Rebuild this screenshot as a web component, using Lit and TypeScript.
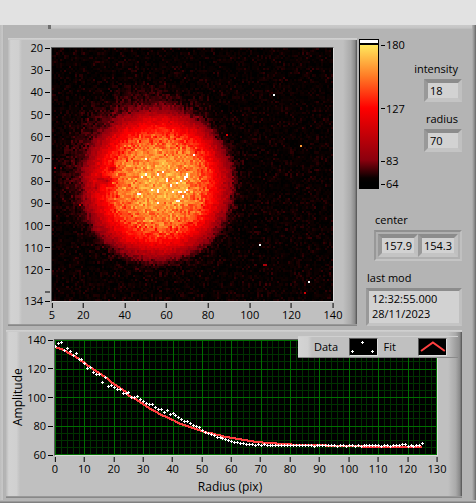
import { LitElement, html, svg, css } from "lit";
import { customElement, query } from "lit/decorators.js";

type Stop = [number, number, number, number];

/* Colour ramp of the intensity scale: level, red, green, blue */
const RAMP: Stop[] = [
  [64, 0, 0, 0],
  [69, 16, 0, 0],
  [83, 139, 0, 14],
  [127, 255, 0, 0],
  [152, 255, 124, 38],
  [180, 255, 232, 92],
];

function rampColour(v: number): [number, number, number] {
  if (v > 180) return [255, 255, 255];
  if (v <= 64) return [0, 0, 0];
  let i = 1;
  while (i < RAMP.length - 1 && v > RAMP[i][0]) i++;
  const a = RAMP[i - 1];
  const b = RAMP[i];
  const t = (v - a[0]) / (b[0] - a[0]);
  return [a[1] + (b[1] - a[1]) * t, a[2] + (b[2] - a[2]) * t, a[3] + (b[3] - a[3]) * t];
}

function interpolate(table: number[][], x: number): number {
  if (x <= table[0][0]) return table[0][1];
  for (let i = 1; i < table.length; i++) {
    if (x <= table[i][0]) {
      const [x0, y0] = table[i - 1];
      const [x1, y1] = table[i];
      return y0 + ((y1 - y0) * (x - x0)) / (x1 - x0);
    }
  }
  return table[table.length - 1][1];
}

/* Repeatable noise */
function makeRandom(seed: number) {
  let s = seed;
  return () => {
    s = (s + 0x6d2b79f5) | 0;
    let t = Math.imul(s ^ (s >>> 15), 1 | s);
    t = (t + Math.imul(t ^ (t >>> 7), 61 | t)) ^ t;
    return ((t ^ (t >>> 14)) >>> 0) / 4294967296;
  };
}

const COLS = 136;
const ROWS = 115;

/* Spot brightness against distance from its centre, as a share of the radius */
const SPOT = [
  [0, 164], [0.25, 161], [0.42, 154], [0.56, 146], [0.66, 137], [0.75, 127],
  [0.85, 110], [0.92, 96], [0.98, 85], [1.04, 75], [1.1, 69], [1.3, 66.5], [3, 66.5],
];

/* Single bright pixels: column, row, level, height */
const HOT = [
  [107, 21, 200, 1], [120, 44, 160, 1], [84, 39, 115, 1], [68, 48, 200, 1],
  [100, 89, 200, 1], [102, 98, 95, 1], [103, 98, 95, 1], [124, 106, 200, 1], [122, 111, 110, 1],
  [13, 71, 110, 1], [23, 75, 105, 2], [1, 54, 90, 1],
  [45, 50, 200, 1], [60, 55, 200, 1], [53, 56, 200, 1], [51, 57, 200, 1],
  [45, 57, 200, 1], [43, 58, 200, 1], [55, 59, 200, 2], [57, 62, 200, 1],
  [65, 57, 200, 2], [64, 58, 200, 2], [62, 60, 200, 1], [60, 61, 200, 1],
  [48, 64, 200, 1], [51, 64, 200, 2], [58, 65, 200, 1], [61, 65, 200, 1],
  [62, 65, 200, 1], [65, 64, 200, 1], [64, 65, 200, 1], [41, 66, 200, 1],
  [42, 66, 200, 1], [63, 67, 200, 1], [60, 69, 200, 1], [61, 69, 200, 1],
  [51, 70, 200, 1],
];

/* Darker patches inside the spot: column, row, spread, depth */
const DIPS = [
  [26, 60, 2, 34], [29, 54, 1.6, 26], [23, 59, 1.6, 20], [21, 63, 1.6, 18],
];

const DATA = [
  136, 138, 138.8, 133, 134.5, 132.3, 129.5, 131, 127, 126.7, 124, 120.5, 121, 117.7,
  116.3, 116, 110.7, 114, 107.8, 108.4, 107, 105.7, 105.7, 103, 103, 103.3, 100, 100,
  100.7, 98.7, 97, 95.7, 95, 95, 93, 91.6, 91.6, 89.5, 91, 88.1, 88.8, 87.4, 86, 84.7,
  83.2, 83.2, 81.8, 80.4, 79.7, 79, 76.9, 75.2, 74.8, 74, 73.4, 72, 72, 71.2, 70.5,
  69.8, 69.1, 68.4, 68.4, 67.7, 67.7, 67, 67, 67, 66.3, 67, 66.3, 67, 66.3, 66.3, 66.3,
  66.3, 66.3, 66.3, 66.3, 66.3, 66.3, 66.3, 66.3, 66.3, 66.3, 66.3, 66.3, 66.3, 65.7,
  66.3, 66.3, 66.3, 66.3, 66.3, 66.3, 66.3, 65.7, 66.3, 66.3, 65.7, 66.3, 66.3, 65.7,
  66.3, 65.7, 66.3, 66.3, 66.3, 66.3, 66.3, 66.3, 65.7, 66.3, 66.3, 65.7, 66.3, 66.3,
  66.3, 67.2, 67.2, 65.7, 66.3, 65.7, 66.3, 66.3, 68,
];

const FIT = [
  [0, 136], [3, 133.5], [6, 130], [10, 125], [15, 117.5], [20, 110], [25, 102.4],
  [30, 95.6], [35, 89.3], [40, 84.4], [45, 80.2], [50, 76.7], [55, 74.2], [60, 72],
  [65, 70.2], [70, 68.8], [80, 67.4], [90, 66.8], [100, 66.2], [112, 65.6], [125, 65.3],
];

const IMAGE_X = [5, 20, 40, 60, 80, 100, 120, 140];
const IMAGE_Y = [20, 30, 40, 50, 60, 70, 80, 90, 100, 110, 120, 130, 134];
const RADIUS_X = [0, 10, 20, 30, 40, 50, 60, 70, 80, 90, 100, 110, 120, 130];
const AMPLITUDE_Y = [140, 120, 100, 80, 60];
const LEVELS = [180, 127, 83, 64];

const range = (from: number, to: number, step: number) =>
  Array.from({ length: Math.round((to - from) / step) + 1 }, (_, i) => from + i * step);

const axisX = (values: number[], min: number, max: number) => html`
  <div class="axis-x">
    ${values.map(
      (v) => html`<span class="mark-x" style="left:${((v - min) / (max - min)) * 100}%">${v}</span>`
    )}
  </div>
`;

const axisY = (values: number[], top: number, bottom: number, unlabelled: number[] = []) => html`
  <div class="axis-y">
    ${values.map(
      (v) => html`<span class="mark-y" style="top:${((v - top) / (bottom - top)) * 100}%"
        >${unlabelled.includes(v) ? "" : v}</span
      >`
    )}
  </div>
`;

const shared = css`
  :host {
    display: block;
  }
  .axis-x,
  .axis-y {
    position: relative;
  }
  .axis-x {
    height: 22px;
    margin: 0 1px;
  }
  .axis-y {
    margin: 1px 0;
  }
  .mark-x,
  .mark-y {
    position: absolute;
    display: flex;
    align-items: center;
    line-height: 14px;
    white-space: nowrap;
  }
  .mark-x {
    flex-direction: column;
    transform: translateX(-50%);
  }
  .mark-x::before {
    content: "";
    width: 1px;
    height: 5px;
    margin-top: 1px;
    background: #000;
  }
  .mark-y {
    right: 1px;
    gap: 2px;
    transform: translateY(-50%);
  }
  .mark-y::after {
    content: "";
    width: 5px;
    height: 1px;
    background: #000;
  }
`;

@customElement("intensity-image")
export class IntensityImage extends LitElement {
  @query("canvas") canvas!: HTMLCanvasElement;

  static styles = [
    shared,
    css`
      .graph {
        display: grid;
        grid-template-columns: 30px 1fr;
      }
      .picture {
        display: block;
        box-sizing: border-box;
        width: 100%;
        aspect-ratio: 283 / 255;
        border: 1px solid #5a5a5a;
        border-right-color: #dcdcdc;
        border-bottom-color: #dcdcdc;
        background: #000;
        image-rendering: pixelated;
      }
      .axis-x {
        grid-column: 2;
      }
    `,
  ];

  firstUpdated() {
    const ctx = this.canvas.getContext("2d")!;
    const image = ctx.createImageData(COLS, ROWS);
    const random = makeRandom(2811);
    const levels: number[] = [];
    for (let y = 0; y < ROWS; y++) {
      for (let x = 0; x < COLS; x++) {
        const dx = x - 49;
        const dy = y - 61.5;
        const angle = Math.atan2(dy, dx);
        const d = Math.hypot(dx, dy * 1.06) / 36.6;
        const inner = Math.hypot(x - 52, (y - 61) * 1.03) / 36.6;
        const mix = Math.max(0, Math.min(1, 1.4 - d));
        let v = interpolate(SPOT, d * (1 - mix) + inner * mix);
        /* faint halo towards the upper left */
        const side = Math.max(0, Math.cos(angle + 2.2));
        if (d > 1) v += 7 * side * Math.exp(-Math.pow((d - 1) / 0.3, 2)) * Math.min(1, (d - 1) * 12);
        const spread = v > 135 ? 13 : v > 78 ? 7 : 5;
        v += (random() + random() + random() - 1.5) * spread * 1.15;
        v = Math.min(v, 179);
        for (const [cx, cy, size, depth] of DIPS) {
          v -= depth * Math.exp(-((x - cx) ** 2 + (y - cy) ** 2) / (size * size));
        }
        levels.push(v);
      }
    }
    for (const [x, y, level, height] of HOT) {
      for (let i = 0; i < height; i++) levels[(y + i) * COLS + x] = level;
    }
    levels.forEach((v, i) => {
      const [r, g, b] = rampColour(v);
      image.data.set([r, g, b, 255], i * 4);
    });
    ctx.putImageData(image, 0, 0);
  }

  render() {
    return html`
      <div class="graph">
        ${axisY(IMAGE_Y, 20, 134, [130])}
        <canvas class="picture" width=${COLS} height=${ROWS}></canvas>
        ${axisX(IMAGE_X, 5, 140)}
      </div>
    `;
  }
}

@customElement("radial-profile")
export class RadialProfile extends LitElement {
  static styles = [
    shared,
    css`
      .graph {
        display: grid;
        grid-template-columns: 14px 29px 1fr;
      }
      .title-y {
        writing-mode: vertical-rl;
        transform: rotate(180deg);
        text-align: center;
        line-height: 14px;
        font-size: 12px;
      }
      .plot {
        display: block;
        box-sizing: border-box;
        width: 100%;
        height: 117px;
        border: 1px solid #5a5a5a;
        border-right-color: #dcdcdc;
        border-bottom-color: #dcdcdc;
        background: #000;
      }
      .axis-x,
      .title-x {
        grid-column: 3;
      }
      .title-x {
        padding-right: 32px;
        text-align: center;
        font-size: 12px;
        line-height: 18px;
      }
      .minor {
        stroke: #003200;
      }
      .major {
        stroke: #006e00;
      }
      .fit {
        fill: none;
        stroke: #ff4040;
        stroke-width: 2;
      }
      .point {
        fill: #fff;
      }
    `,
  ];

  render() {
    const w = 382;
    const h = 115;
    const px = (r: number) => Math.min(w - 1, Math.round((r / 130) * w));
    const py = (a: number) => Math.min(h - 1, Math.round(((140 - a) / 80) * (h - 1)));
    const lineX = (r: number, kind: string) =>
      svg`<path class=${kind} d="M${px(r) + 0.5} 0V${h}" />`;
    const lineY = (a: number, kind: string) =>
      svg`<path class=${kind} d="M0 ${py(a) + 0.5}H${w}" />`;
    const fit = range(0, 125, 1)
      .map((r) => `${px(r)},${py(interpolate(FIT, r)) + 1}`)
      .join(" ");
    return html`
      <div class="graph">
        <div class="title-y">Amplitude</div>
        ${axisY(AMPLITUDE_Y, 140, 60)}
        <svg class="plot" viewBox="0 0 ${w} ${h}" preserveAspectRatio="none" shape-rendering="crispEdges">
          ${range(0, 130, 2).map((r) => lineX(r, "minor"))}
          ${range(60, 140, 5).map((a) => lineY(a, "minor"))}
          ${RADIUS_X.map((r) => lineX(r, "major"))}
          ${AMPLITUDE_Y.map((a) => lineY(a, "major"))}
          <polyline class="fit" points=${fit} />
          ${DATA.map(
            (a, r) =>
              svg`<path class="point" d="M${px(r) - 1} ${py(a)}h1v-1h1v1h1v1h-1v1h-1v-1h-1z" />`
          )}
        </svg>
        ${axisX(RADIUS_X, 0, 130)}
        <div class="title-x">Radius (pix)</div>
      </div>
    `;
  }
}

@customElement("app-root")
export class AppRoot extends LitElement {
  static styles = css`
    :host {
      display: block;
      font: 11px/14px "Open Sans", "Noto Sans", sans-serif;
      color: #000;
      background: #b4b4b4;
    }
    .strip {
      height: 25px;
      background: #e2e2e2;
    }
    .window {
      box-sizing: border-box;
      min-height: calc(100vh - 25px);
      background:
        linear-gradient(#c4c4c4, #8c8c8c 50%, #606060) bottom / 100% 4px no-repeat,
        linear-gradient(to right, #b4b4b4, #8c8c8c 60%, #686868) right / 4px 100% no-repeat,
        linear-gradient(to right, #bcbcbc, #c8c8c8 60%, #a8a8a8) left / 4px 100% no-repeat,
        #b4b4b4;
    }
    .edge {
      height: 4px;
      margin: 0 4px 9px 48px;
      border-left: 3px solid #707070;
      background: linear-gradient(#cacaca, #c4c4c4 80%, #b4b4b4);
    }
    .body {
      display: flex;
      flex-direction: column;
      gap: 4px;
      padding: 0 14px 6px 6px;
    }
    .upper {
      display: flex;
      gap: 2px;
      padding-left: 2px;
    }
    .frame {
      position: relative;
      box-sizing: border-box;
      background:
        linear-gradient(#d2d2d2, #c8c8c8) top / 100% 2px no-repeat,
        linear-gradient(#a0a0a0, #808080) bottom / 100% 2px no-repeat,
        linear-gradient(to right, #c0c0c0, #aaaaaa 55%, #8a8a8a 85%, #505050) right / 14px 100% no-repeat,
        linear-gradient(to right, #bababa, #d2d2d2 20%, #d0d0d0 75%, #c0c0c0) left / 14px 100% no-repeat,
        #c0c0c0;
    }
    .image-frame {
      flex: 1;
      min-width: 0;
      padding: 9px 23px 2px 13px;
    }
    .profile-frame {
      padding: 9px 24px 2px 5px;
    }
    .side {
      display: flex;
      flex-direction: column;
      justify-content: space-between;
      width: 103px;
    }
    .row {
      display: flex;
      justify-content: space-between;
    }
    .scale {
      display: flex;
      gap: 2px;
      height: 151px;
      padding-top: 1px;
    }
    .ramp {
      box-sizing: border-box;
      width: 20px;
      height: 150px;
      border: 1px solid #000;
      background: linear-gradient(
        #fff 3px,
        #000 3px,
        #000 5px,
        #ffe85c 5px,
        #ff7c26 36px,
        #ff0000 68px,
        #8b000e 120px,
        #080000 138px,
        #000 143px
      );
    }
    .levels {
      position: relative;
      width: 26px;
      margin: 6px 0;
    }
    .level {
      position: absolute;
      display: flex;
      align-items: center;
      gap: 1px;
      transform: translateY(-50%);
    }
    .level::before {
      content: "";
      width: 4px;
      height: 1px;
      background: #000;
    }
    .readouts {
      display: flex;
      flex-direction: column;
      align-items: flex-end;
      gap: 9px;
      padding-top: 23px;
    }
    .readout {
      display: flex;
      flex-direction: column;
      gap: 3px;
      align-items: flex-end;
    }
    .caption {
      padding: 0 4px 0 1px;
      line-height: 15px;
    }
    .left {
      align-items: flex-start;
    }
    .value {
      box-sizing: border-box;
      margin: 0;
      border: 4px solid;
      border-color: #8c8c8c #c0c0c0 #c4c4c4 #999;
      border-radius: 0;
      outline: none;
      background: #d2d2d2;
      color: #000;
      font: inherit;
    }
    .number {
      width: 38px;
      height: 23px;
      padding: 0 2px;
    }
    .cluster {
      display: flex;
      padding: 2px;
      border: 2px solid;
      border-color: #909090 #c0c0c0 #c4c4c4 #989898;
      background: #b0b0b0;
    }
    .pair {
      width: 40px;
    }
    .stamp {
      display: block;
      width: 96px;
      height: 38px;
      padding: 0 3px;
      border-width: 3px;
      line-height: 15px;
      resize: none;
      overflow: hidden;
    }
    .lower-readouts {
      display: flex;
      flex-direction: column;
      gap: 9px;
      align-items: flex-end;
    }
    .legend {
      position: absolute;
      top: 6px;
      right: 4px;
      display: flex;
      align-items: center;
      box-sizing: border-box;
      width: 160px;
      height: 22px;
      padding: 0 11px 0 16px;
      background:
        linear-gradient(#d0d0d0, #d0d0d0) top / 100% 1px no-repeat,
        linear-gradient(#8a8a8a, #8a8a8a) bottom / 100% 1px no-repeat,
        linear-gradient(to right, #c0c0c0, #969696) right / 10px 100% no-repeat,
        linear-gradient(to right, #d4d4d4, #d0d0d0 70%, #c0c0c0) left / 14px 100% no-repeat,
        #c0c0c0;
    }
    .name {
      width: 35px;
    }
    .swatch {
      display: block;
      box-sizing: border-box;
      width: 29px;
      height: 18px;
      border: 1px solid #5a5a5a;
      border-right-color: #dcdcdc;
      border-bottom-color: #dcdcdc;
      background: #000;
    }
    .swatch + .name {
      padding-left: 6px;
    }
  `;

  render() {
    return html`
      <div class="strip"></div>
      <main class="window">
        <div class="edge"></div>
        <div class="body">
          <div class="upper">
            <section class="frame image-frame">
              <intensity-image></intensity-image>
            </section>
            <aside class="side">
              <div class="row">
                <div class="scale">
                  <div class="ramp"></div>
                  <div class="levels">
                    ${LEVELS.map(
                      (v) => html`<span class="level" style="top:${((180 - v) / 116) * 100}%">${v}</span>`
                    )}
                  </div>
                </div>
                <div class="readouts">
                  <div class="readout">
                    <label class="caption" for="intensity">intensity</label>
                    <input class="value number" id="intensity" readonly value="18" />
                  </div>
                  <div class="readout">
                    <label class="caption" for="radius">radius</label>
                    <input class="value number" id="radius" readonly value="70" />
                  </div>
                </div>
              </div>
              <div class="lower-readouts">
                <div class="readout left">
                  <label class="caption" for="center-x">center</label>
                  <div class="cluster">
                    <input class="value number pair" id="center-x" readonly value="157.9" />
                    <input class="value number pair" aria-label="center y" readonly value="154.39" />
                  </div>
                </div>
                <div class="readout left">
                  <label class="caption" for="last-mod">last mod</label>
                  <textarea class="value stamp" id="last-mod" rows="2" readonly .value=${"12:32:55.000\n28/11/2023"}></textarea>
                </div>
              </div>
            </aside>
          </div>
          <section class="frame profile-frame">
            <radial-profile></radial-profile>
            <div class="legend">
              <span class="name">Data</span>
              <svg class="swatch" viewBox="0 0 27 16" shape-rendering="crispEdges">
                <path
                  fill="#fff"
                  d="M11 3h1v-1h1v1h1v1h-1v1h-1v-1h-1zM1 12h1v-1h1v1h1v1h-1v1h-1v-1h-1zM21 12h1v-1h1v1h1v1h-1v1h-1v-1h-1z"
                />
              </svg>
              <span class="name">Fit</span>
              <svg class="swatch" viewBox="0 0 27 16">
                <path fill="none" stroke="#ff4040" stroke-width="2" d="M2 12L14 3.5L26 12" />
              </svg>
            </div>
          </section>
        </div>
      </main>
    `;
  }
}
